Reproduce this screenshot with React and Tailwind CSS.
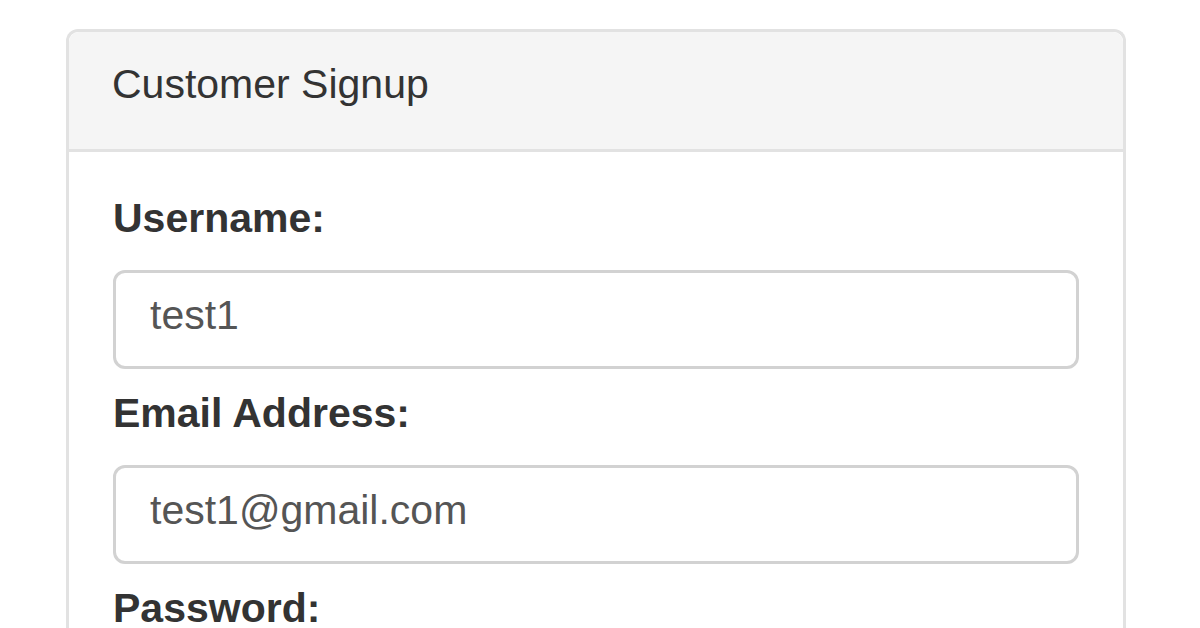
import React from "react";

function Field({ label, value }) {
  return (
    <div>
      <label className="block font-bold leading-[58px] text-[41px] text-[#333] mb-[23px]">
        {label}
      </label>
      <div className="flex h-[99px] items-center rounded-[12px] border-[3px] border-[#d2d2d2] bg-white px-[34px] pb-[8px] text-[41px] text-[#555] mb-[15px]">
        {value}
      </div>
    </div>
  );
}

export default function App() {
  return (
    <div className="min-h-[628px] overflow-hidden bg-white pt-[29px] pl-[66px] font-['Liberation_Sans',Arial,sans-serif]">
      <div className="w-[1060px] rounded-t-[12px] border-[3px] border-b-0 border-[#e2e2e2]">
        <div className="rounded-t-[10px] border-b-[3px] border-[#e2e2e2] bg-[#f5f5f5] px-[43px] pt-[23px] pb-[36px] text-[41px] leading-[58px] text-[#333]">
          Customer Signup
        </div>
        <div className="px-[44px] pt-[37px]">
          <Field label="Username:" value="test1" />
          <Field label="Email Address:" value="test1@gmail.com" />
          <label className="block font-bold leading-[58px] text-[41px] text-[#333]">
            Password:
          </label>
        </div>
      </div>
    </div>
  );
}
